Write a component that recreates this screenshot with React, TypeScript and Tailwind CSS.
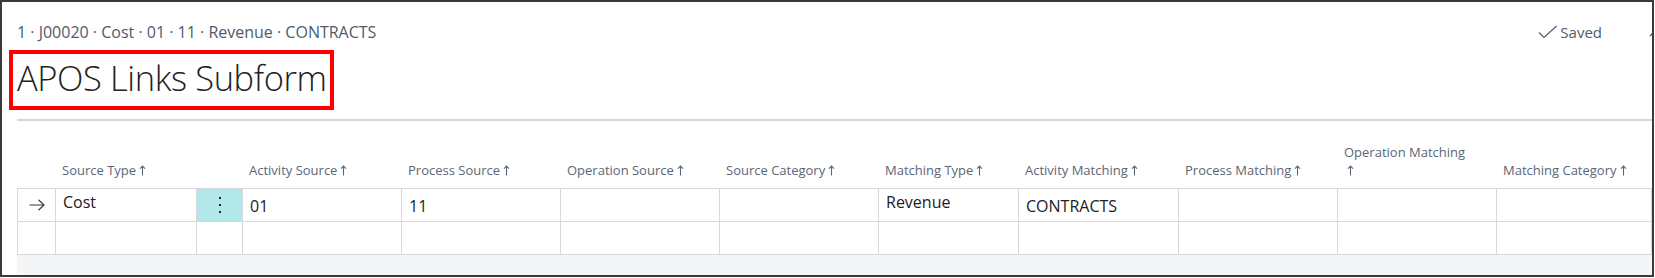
import React from 'react';

type Column = { label: string; wrap?: boolean };

const columns: Column[] = [
  { label: 'Source Type' },
  { label: '' },
  { label: 'Activity Source' },
  { label: 'Process Source' },
  { label: 'Operation Source' },
  { label: 'Source Category' },
  { label: 'Matching Type' },
  { label: 'Activity Matching' },
  { label: 'Process Matching' },
  { label: 'Operation Matching', wrap: true },
  { label: 'Matching Category' },
];

const firstRow = ['Cost', 'dots', '01', '11', '', '', 'Revenue', 'CONTRACTS', '', '', ''];

const gridCols =
  'grid grid-cols-[38px_141px_46px_159px_159px_159px_159px_140px_160px_159px_159px_1fr]';

function SortArrow() {
  return (
    <svg width="7" height="11" viewBox="0 0 7 11" className="inline-block ml-[3px] -mt-[3px] align-middle">
      <path d="M3.5 10.5V1M1 3.6 3.5 1 6 3.6" stroke="#5b6677" strokeWidth="1.1" fill="none" />
    </svg>
  );
}

function RowArrow() {
  return (
    <svg width="16" height="12" viewBox="0 0 16 12">
      <path d="M0.5 6H15M9.5 0.8 15 6l-5.5 5.2" stroke="#3b3b3b" strokeWidth="1.2" fill="none" />
    </svg>
  );
}

function Dots() {
  return (
    <div className="flex flex-col items-center gap-[5px]">
      <span className="block w-[2px] h-[2px] bg-[#222]" />
      <span className="block w-[2px] h-[2px] bg-[#222]" />
      <span className="block w-[2px] h-[2px] bg-[#222]" />
    </div>
  );
}

export default function App() {
  return (
    <div className="w-[1655px] h-[278px] bg-white" style={{ fontFamily: '"Open Sans", "Noto Sans", sans-serif' }}>
      <div className="w-[1654px] h-[277px] border-2 border-[#3a3a3a] overflow-hidden flex flex-col pl-[15px]">
        <div className="flex items-start justify-between pt-[20px] h-[44px]">
          <div className="text-[16px] leading-[20px] text-[#4f5b6b] whitespace-nowrap">
            1 · J00020 · Cost · 01 · 11 · Revenue · CONTRACTS
          </div>
          <div className="flex items-center -mr-[8px] shrink-0">
            <div className="flex items-center gap-[2px] text-[15px] leading-[20px] text-[#505c6d]">
              <svg width="20" height="14" viewBox="0 0 20 14">
                <path d="M1 7.5 6 12.5 18.5 1" stroke="#505c6d" strokeWidth="1.2" fill="none" />
              </svg>
              <span>Saved</span>
            </div>
            <svg width="12" height="12" viewBox="0 0 12 12" className="ml-[46px] shrink-0">
              <path d="M2 10 10 2M5 2h5v5" stroke="#008489" strokeWidth="1.4" fill="none" />
            </svg>
          </div>
        </div>

        <div className="-ml-[8px] mt-[4px] w-[325px] h-[60px] border-4 border-[#ff0000] pl-[4px] flex items-center">
          <span className="text-[34.5px] font-light leading-[52px] tracking-[-0.4px] text-[#212121] whitespace-nowrap -mt-[4px]">
            APOS Links Subform
          </span>
        </div>

        <div className="mt-[9px] h-[2px] bg-[#d3d5d8]" />

        <div className={`${gridCols} h-[67px]`}>
          <div />
          {columns.map((col, i) => (
            <div key={i} className="flex items-end pl-[7px] pb-[9px] text-[13px] leading-[18px] text-[#5b6677]">
              {col.label &&
                (col.wrap ? (
                  <span>
                    {col.label}
                    <br />
                    <SortArrow />
                  </span>
                ) : (
                  <span className="whitespace-nowrap">
                    {col.label}
                    <SortArrow />
                  </span>
                ))}
            </div>
          ))}
        </div>

        <div className="border-l border-t border-[#d7d8db]">
          <div className={`${gridCols} h-[33px]`}>
            <div className="border-r border-b border-[#d7d8db] flex items-center justify-center">
              <RowArrow />
            </div>
            {firstRow.map((v, i) =>
              v === 'dots' ? (
                <div key={i} className="border-r border-b border-[#d7d8db] bg-[#b3e8ea] flex items-center justify-center">
                  <Dots />
                </div>
              ) : (
                <div
                  key={i}
                  className={`border-r border-b border-[#d7d8db] pl-[7px] flex items-center text-[16px] text-[#212121] ${
                    v === 'Cost' || v === 'Revenue' ? 'pb-[7px]' : 'pt-[1px]'
                  }`}
                >
                  {v}
                </div>
              )
            )}
          </div>
          <div className={`${gridCols} h-[33px]`}>
            {Array.from({ length: 12 }).map((_, i) => (
              <div key={i} className="border-r border-b border-[#d7d8db]" />
            ))}
          </div>
        </div>

        <div className="flex-1 bg-[#f4f5f7]" />
      </div>
    </div>
  );
}
